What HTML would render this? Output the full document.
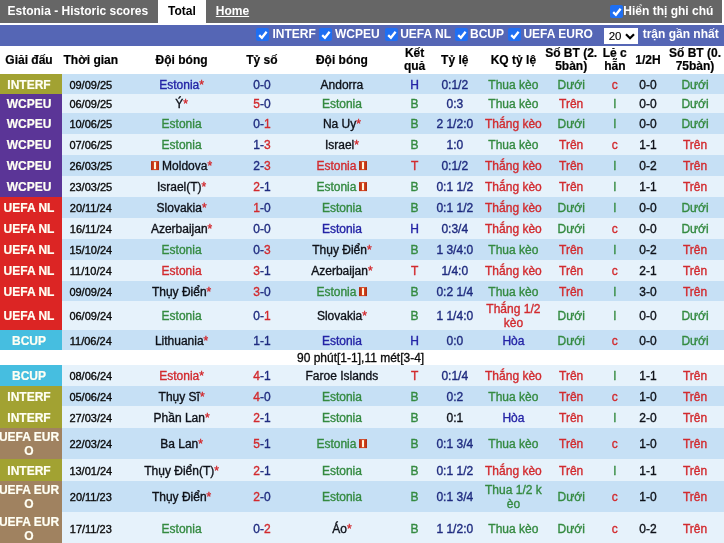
<!DOCTYPE html>
<html><head><meta charset="utf-8"><title>Estonia - Historic scores</title>
<style>
html,body{margin:0;padding:0;}
body{width:724px;height:543px;overflow:hidden;position:relative;background:#fff;font-family:"Liberation Sans",sans-serif;font-size:12px;color:#0a0a0a;}
#top{position:absolute;left:0;top:0;width:722px;height:23px;background:#666;}
#top .t{position:absolute;top:0;height:22.3px;line-height:22px;font-weight:bold;font-size:12px;color:#fff;white-space:nowrap;}
#tab{position:absolute;left:158px;top:0;width:48px;height:24.5px;background:#fff;}
#filter{position:absolute;left:0;top:24.5px;width:724px;height:21px;background:#5566b5;}
.lbl{position:absolute;top:-0.7px;line-height:21px;font-weight:bold;color:#fff;white-space:nowrap;}
.cb{position:absolute;width:13px;height:13px;border-radius:2px;background:#1f6ff2;}
.cb svg{position:absolute;left:0;top:0;}
#sel{position:absolute;left:604px;top:28.1px;width:34px;height:16px;background:#fff;}
#sel span{position:absolute;left:4.7px;top:0.2px;line-height:16px;font-size:11.5px;color:#000;-webkit-text-stroke:0.15px;}
#sel svg{position:absolute;left:21px;top:4.6px;}
.hd{position:absolute;top:45.5px;height:28.6px;}
.hc{position:absolute;width:120px;text-align:center;font-weight:bold;color:#000;-webkit-text-stroke:0.2px;line-height:13.8px;white-space:nowrap;}
.row{position:absolute;left:0;width:724px;}
.dk{background:#c6e0f5;}
.lt{background:#e6f2fb;}
.wr{background:#fff;}
.note{position:absolute;left:297px;top:1px;line-height:14px;white-space:nowrap;color:#0a0a0a;-webkit-text-stroke:0.3px;}
.lg{position:absolute;left:0;top:0;width:62px;height:100%;}
.lgt{position:absolute;left:-31px;width:120px;top:calc(50% + 1.5px);transform:translateY(-50%);text-align:center;color:#fffff4;-webkit-text-stroke:0.2px;font-weight:bold;line-height:13.8px;white-space:nowrap;}
.c{position:absolute;width:120px;top:calc(50% + 1.8px);transform:translateY(-50%);-webkit-text-stroke:0.35px;text-align:center;line-height:13.8px;white-space:nowrap;}
.dt{font-size:11px;}
.n{color:#1f2b7f;}
.b{color:#2424a6;}
.g{color:#348a40;}
.r{color:#d22a2e;}
.k{color:#0e1118;}
.rc{display:inline-block;width:8px;height:9px;background:linear-gradient(to right,#a82c12,#d8441c 35%,#d8441c 65%,#a82c12);vertical-align:0px;position:relative;margin-right:3px;}
.rc::after{content:"";position:absolute;left:3px;top:1px;width:2px;height:7px;background:#fff6dc;}
.rr{margin-right:0;margin-left:3px;}

body{will-change:transform;}

</style></head><body>
<div id="top">
  <div class="t" style="left:7.5px">Estonia - Historic scores</div>
</div>
<div id="tab"></div>
<div class="t" style="position:absolute;left:168px;top:0;height:22.3px;line-height:22px;font-weight:bold;color:#000;">Total</div>
<div class="t" style="position:absolute;left:215.8px;top:0;height:22.3px;line-height:22px;font-weight:bold;color:#fff;text-decoration:underline;">Home</div>
<div class="cb" style="left:609.5px;top:4.5px"><svg width="13" height="13" viewBox="0 0 13 13"><path d="M3.2 7.2 L5.9 9.8 L10.6 3.8" stroke="#fff" stroke-width="2.3" fill="none"/></svg></div>
<div class="t" style="position:absolute;left:623.3px;top:0;height:22.3px;line-height:22px;font-weight:bold;color:#fff;">Hiển thị ghi chú</div>
<div id="filter">
  <div class="cb" style="left:256px;top:3.6px"><svg width="13" height="13" viewBox="0 0 13 13"><path d="M3.2 7.2 L5.9 9.8 L10.6 3.8" stroke="#fff" stroke-width="2.3" fill="none"/></svg></div>
  <div class="lbl" style="left:272.4px">INTERF</div>
  <div class="cb" style="left:319px;top:3.6px"><svg width="13" height="13" viewBox="0 0 13 13"><path d="M3.2 7.2 L5.9 9.8 L10.6 3.8" stroke="#fff" stroke-width="2.3" fill="none"/></svg></div>
  <div class="lbl" style="left:335px">WCPEU</div>
  <div class="cb" style="left:384.5px;top:3.6px"><svg width="13" height="13" viewBox="0 0 13 13"><path d="M3.2 7.2 L5.9 9.8 L10.6 3.8" stroke="#fff" stroke-width="2.3" fill="none"/></svg></div>
  <div class="lbl" style="left:400.2px">UEFA NL</div>
  <div class="cb" style="left:455px;top:3.6px"><svg width="13" height="13" viewBox="0 0 13 13"><path d="M3.2 7.2 L5.9 9.8 L10.6 3.8" stroke="#fff" stroke-width="2.3" fill="none"/></svg></div>
  <div class="lbl" style="left:470px">BCUP</div>
  <div class="cb" style="left:507.5px;top:3.6px"><svg width="13" height="13" viewBox="0 0 13 13"><path d="M3.2 7.2 L5.9 9.8 L10.6 3.8" stroke="#fff" stroke-width="2.3" fill="none"/></svg></div>
  <div class="lbl" style="left:523.4px">UEFA EURO</div>
  <div class="lbl" style="left:642.7px">trận gần nhất</div>
</div>
<div id="sel"><span>20</span><svg width="10" height="7" viewBox="0 0 10 7"><path d="M1 1.2 L5 5.2 L9 1.2" stroke="#000" stroke-width="2.2" fill="none"/></svg></div>
<div class="hd" style="left:0;width:724px">
  <div class="hc" style="left:-31px;top:8.3px">Giải đấu</div>
  <div class="hc" style="left:30.8px;top:8.3px">Thời gian</div>
  <div class="hc" style="left:121.6px;top:8.3px">Đội bóng</div>
  <div class="hc" style="left:201.9px;top:8.3px">Tỷ số</div>
  <div class="hc" style="left:281.9px;top:8.3px">Đội bóng</div>
  <div class="hc" style="left:354.6px;top:1.2px">Kết<br>quả</div>
  <div class="hc" style="left:394.8px;top:8.3px">Tỷ lệ</div>
  <div class="hc" style="left:453.4px;top:8.3px">KQ tỷ lệ</div>
  <div class="hc" style="left:511.2px;top:1.2px">Số BT (2.<br>5bàn)</div>
  <div class="hc" style="left:554.8px;top:1.2px">Lẻ c<br>hẵn</div>
  <div class="hc" style="left:587.9px;top:8.3px">1/2H</div>
  <div class="hc" style="left:635px;top:1.2px">Số BT (0.<br>75bàn)</div>
</div>

<div class="row dk" style="top:74.0px;height:20.0px"><div class="lg" style="background:#a2a232"><div class="lgt">INTERF</div></div><div class="c dt" style="left:30.8px">09/09/25</div><div class="c " style="left:121.6px"><span class="b">Estonia</span><span class="r">*</span></div><div class="c " style="left:201.9px"><span class="n">0</span><span class="n">-</span><span class="n">0</span></div><div class="c " style="left:281.9px"><span class="k">Andorra</span></div><div class="c " style="left:354.6px"><span class="b">H</span></div><div class="c " style="left:394.8px"><span class="n">0:1/2</span></div><div class="c " style="left:453.4px"><span class="g">Thua kèo</span></div><div class="c " style="left:511.2px"><span class="g">Dưới</span></div><div class="c " style="left:554.8px"><span class="r">c</span></div><div class="c k" style="left:587.9px">0-0</div><div class="c " style="left:635.0px"><span class="g">Dưới</span></div></div>
<div class="row lt" style="top:94.0px;height:19.0px"><div class="lg" style="background:#5b3597"><div class="lgt">WCPEU</div></div><div class="c dt" style="left:30.8px">06/09/25</div><div class="c " style="left:121.6px"><span class="k">Ý</span><span class="r">*</span></div><div class="c " style="left:201.9px"><span class="r">5</span><span class="n">-</span><span class="n">0</span></div><div class="c " style="left:281.9px"><span class="g">Estonia</span></div><div class="c " style="left:354.6px"><span class="g">B</span></div><div class="c " style="left:394.8px"><span class="n">0:3</span></div><div class="c " style="left:453.4px"><span class="g">Thua kèo</span></div><div class="c " style="left:511.2px"><span class="r">Trên</span></div><div class="c " style="left:554.8px"><span class="g">l</span></div><div class="c k" style="left:587.9px">0-0</div><div class="c " style="left:635.0px"><span class="g">Dưới</span></div></div>
<div class="row dk" style="top:113.0px;height:21.0px"><div class="lg" style="background:#5b3597"><div class="lgt">WCPEU</div></div><div class="c dt" style="left:30.8px">10/06/25</div><div class="c " style="left:121.6px"><span class="g">Estonia</span></div><div class="c " style="left:201.9px"><span class="n">0</span><span class="n">-</span><span class="r">1</span></div><div class="c " style="left:281.9px"><span class="k">Na Uy</span><span class="r">*</span></div><div class="c " style="left:354.6px"><span class="g">B</span></div><div class="c " style="left:394.8px"><span class="n">2 1/2:0</span></div><div class="c " style="left:453.4px"><span class="r">Thắng kèo</span></div><div class="c " style="left:511.2px"><span class="g">Dưới</span></div><div class="c " style="left:554.8px"><span class="g">l</span></div><div class="c k" style="left:587.9px">0-0</div><div class="c " style="left:635.0px"><span class="g">Dưới</span></div></div>
<div class="row lt" style="top:134.0px;height:21.0px"><div class="lg" style="background:#5b3597"><div class="lgt">WCPEU</div></div><div class="c dt" style="left:30.8px">07/06/25</div><div class="c " style="left:121.6px"><span class="g">Estonia</span></div><div class="c " style="left:201.9px"><span class="n">1</span><span class="n">-</span><span class="r">3</span></div><div class="c " style="left:281.9px"><span class="k">Israel</span><span class="r">*</span></div><div class="c " style="left:354.6px"><span class="g">B</span></div><div class="c " style="left:394.8px"><span class="n">1:0</span></div><div class="c " style="left:453.4px"><span class="g">Thua kèo</span></div><div class="c " style="left:511.2px"><span class="r">Trên</span></div><div class="c " style="left:554.8px"><span class="r">c</span></div><div class="c k" style="left:587.9px">1-1</div><div class="c " style="left:635.0px"><span class="r">Trên</span></div></div>
<div class="row dk" style="top:155.0px;height:21.0px"><div class="lg" style="background:#5b3597"><div class="lgt">WCPEU</div></div><div class="c dt" style="left:30.8px">26/03/25</div><div class="c " style="left:121.6px"><i class="rc"></i><span class="k">Moldova</span><span class="r">*</span></div><div class="c " style="left:201.9px"><span class="n">2</span><span class="n">-</span><span class="r">3</span></div><div class="c " style="left:281.9px"><span class="r">Estonia</span><i class="rc rr"></i></div><div class="c " style="left:354.6px"><span class="r">T</span></div><div class="c " style="left:394.8px"><span class="n">0:1/2</span></div><div class="c " style="left:453.4px"><span class="r">Thắng kèo</span></div><div class="c " style="left:511.2px"><span class="r">Trên</span></div><div class="c " style="left:554.8px"><span class="g">l</span></div><div class="c k" style="left:587.9px">0-2</div><div class="c " style="left:635.0px"><span class="r">Trên</span></div></div>
<div class="row lt" style="top:176.0px;height:21.0px"><div class="lg" style="background:#5b3597"><div class="lgt">WCPEU</div></div><div class="c dt" style="left:30.8px">23/03/25</div><div class="c " style="left:121.6px"><span class="k">Israel(T)</span><span class="r">*</span></div><div class="c " style="left:201.9px"><span class="r">2</span><span class="n">-</span><span class="n">1</span></div><div class="c " style="left:281.9px"><span class="g">Estonia</span><i class="rc rr"></i></div><div class="c " style="left:354.6px"><span class="g">B</span></div><div class="c " style="left:394.8px"><span class="n">0:1 1/2</span></div><div class="c " style="left:453.4px"><span class="r">Thắng kèo</span></div><div class="c " style="left:511.2px"><span class="r">Trên</span></div><div class="c " style="left:554.8px"><span class="g">l</span></div><div class="c k" style="left:587.9px">1-1</div><div class="c " style="left:635.0px"><span class="r">Trên</span></div></div>
<div class="row dk" style="top:197.0px;height:21.0px"><div class="lg" style="background:#dc2524"><div class="lgt">UEFA NL</div></div><div class="c dt" style="left:30.8px">20/11/24</div><div class="c " style="left:121.6px"><span class="k">Slovakia</span><span class="r">*</span></div><div class="c " style="left:201.9px"><span class="r">1</span><span class="n">-</span><span class="n">0</span></div><div class="c " style="left:281.9px"><span class="g">Estonia</span></div><div class="c " style="left:354.6px"><span class="g">B</span></div><div class="c " style="left:394.8px"><span class="n">0:1 1/2</span></div><div class="c " style="left:453.4px"><span class="r">Thắng kèo</span></div><div class="c " style="left:511.2px"><span class="g">Dưới</span></div><div class="c " style="left:554.8px"><span class="g">l</span></div><div class="c k" style="left:587.9px">0-0</div><div class="c " style="left:635.0px"><span class="g">Dưới</span></div></div>
<div class="row lt" style="top:218.0px;height:21.0px"><div class="lg" style="background:#dc2524"><div class="lgt">UEFA NL</div></div><div class="c dt" style="left:30.8px">16/11/24</div><div class="c " style="left:121.6px"><span class="k">Azerbaijan</span><span class="r">*</span></div><div class="c " style="left:201.9px"><span class="n">0</span><span class="n">-</span><span class="n">0</span></div><div class="c " style="left:281.9px"><span class="b">Estonia</span></div><div class="c " style="left:354.6px"><span class="b">H</span></div><div class="c " style="left:394.8px"><span class="n">0:3/4</span></div><div class="c " style="left:453.4px"><span class="r">Thắng kèo</span></div><div class="c " style="left:511.2px"><span class="g">Dưới</span></div><div class="c " style="left:554.8px"><span class="r">c</span></div><div class="c k" style="left:587.9px">0-0</div><div class="c " style="left:635.0px"><span class="g">Dưới</span></div></div>
<div class="row dk" style="top:239.0px;height:21.0px"><div class="lg" style="background:#dc2524"><div class="lgt">UEFA NL</div></div><div class="c dt" style="left:30.8px">15/10/24</div><div class="c " style="left:121.6px"><span class="g">Estonia</span></div><div class="c " style="left:201.9px"><span class="n">0</span><span class="n">-</span><span class="r">3</span></div><div class="c " style="left:281.9px"><span class="k">Thụy Điển</span><span class="r">*</span></div><div class="c " style="left:354.6px"><span class="g">B</span></div><div class="c " style="left:394.8px"><span class="n">1 3/4:0</span></div><div class="c " style="left:453.4px"><span class="g">Thua kèo</span></div><div class="c " style="left:511.2px"><span class="r">Trên</span></div><div class="c " style="left:554.8px"><span class="g">l</span></div><div class="c k" style="left:587.9px">0-2</div><div class="c " style="left:635.0px"><span class="r">Trên</span></div></div>
<div class="row lt" style="top:260.0px;height:21.0px"><div class="lg" style="background:#dc2524"><div class="lgt">UEFA NL</div></div><div class="c dt" style="left:30.8px">11/10/24</div><div class="c " style="left:121.6px"><span class="r">Estonia</span></div><div class="c " style="left:201.9px"><span class="r">3</span><span class="n">-</span><span class="n">1</span></div><div class="c " style="left:281.9px"><span class="k">Azerbaijan</span><span class="r">*</span></div><div class="c " style="left:354.6px"><span class="r">T</span></div><div class="c " style="left:394.8px"><span class="n">1/4:0</span></div><div class="c " style="left:453.4px"><span class="r">Thắng kèo</span></div><div class="c " style="left:511.2px"><span class="r">Trên</span></div><div class="c " style="left:554.8px"><span class="r">c</span></div><div class="c k" style="left:587.9px">2-1</div><div class="c " style="left:635.0px"><span class="r">Trên</span></div></div>
<div class="row dk" style="top:281.0px;height:20.0px"><div class="lg" style="background:#dc2524"><div class="lgt">UEFA NL</div></div><div class="c dt" style="left:30.8px">09/09/24</div><div class="c " style="left:121.6px"><span class="k">Thụy Điển</span><span class="r">*</span></div><div class="c " style="left:201.9px"><span class="r">3</span><span class="n">-</span><span class="n">0</span></div><div class="c " style="left:281.9px"><span class="g">Estonia</span><i class="rc rr"></i></div><div class="c " style="left:354.6px"><span class="g">B</span></div><div class="c " style="left:394.8px"><span class="n">0:2 1/4</span></div><div class="c " style="left:453.4px"><span class="g">Thua kèo</span></div><div class="c " style="left:511.2px"><span class="r">Trên</span></div><div class="c " style="left:554.8px"><span class="g">l</span></div><div class="c k" style="left:587.9px">3-0</div><div class="c " style="left:635.0px"><span class="r">Trên</span></div></div>
<div class="row lt" style="top:301.0px;height:29.0px"><div class="lg" style="background:#dc2524"><div class="lgt">UEFA NL</div></div><div class="c dt" style="left:30.8px">06/09/24</div><div class="c " style="left:121.6px"><span class="g">Estonia</span></div><div class="c " style="left:201.9px"><span class="n">0</span><span class="n">-</span><span class="r">1</span></div><div class="c " style="left:281.9px"><span class="k">Slovakia</span><span class="r">*</span></div><div class="c " style="left:354.6px"><span class="g">B</span></div><div class="c " style="left:394.8px"><span class="n">1 1/4:0</span></div><div class="c " style="left:453.4px"><span class="r">Thắng 1/2<br>kèo</span></div><div class="c " style="left:511.2px"><span class="g">Dưới</span></div><div class="c " style="left:554.8px"><span class="g">l</span></div><div class="c k" style="left:587.9px">0-0</div><div class="c " style="left:635.0px"><span class="g">Dưới</span></div></div>
<div class="row dk" style="top:330.0px;height:20.0px"><div class="lg" style="background:#46bee0"><div class="lgt">BCUP</div></div><div class="c dt" style="left:30.8px">11/06/24</div><div class="c " style="left:121.6px"><span class="k">Lithuania</span><span class="r">*</span></div><div class="c " style="left:201.9px"><span class="n">1</span><span class="n">-</span><span class="n">1</span></div><div class="c " style="left:281.9px"><span class="b">Estonia</span></div><div class="c " style="left:354.6px"><span class="b">H</span></div><div class="c " style="left:394.8px"><span class="n">0:0</span></div><div class="c " style="left:453.4px"><span class="b">Hòa</span></div><div class="c " style="left:511.2px"><span class="g">Dưới</span></div><div class="c " style="left:554.8px"><span class="r">c</span></div><div class="c k" style="left:587.9px">0-0</div><div class="c " style="left:635.0px"><span class="g">Dưới</span></div></div>
<div class="row wr" style="top:350px;height:15px"><div class="note">90 phút[1-1],11 mét[3-4]</div></div>
<div class="row lt" style="top:365.0px;height:21.0px"><div class="lg" style="background:#46bee0"><div class="lgt">BCUP</div></div><div class="c dt" style="left:30.8px">08/06/24</div><div class="c " style="left:121.6px"><span class="r">Estonia</span><span class="r">*</span></div><div class="c " style="left:201.9px"><span class="r">4</span><span class="n">-</span><span class="n">1</span></div><div class="c " style="left:281.9px"><span class="k">Faroe Islands</span></div><div class="c " style="left:354.6px"><span class="r">T</span></div><div class="c " style="left:394.8px"><span class="n">0:1/4</span></div><div class="c " style="left:453.4px"><span class="r">Thắng kèo</span></div><div class="c " style="left:511.2px"><span class="r">Trên</span></div><div class="c " style="left:554.8px"><span class="g">l</span></div><div class="c k" style="left:587.9px">1-1</div><div class="c " style="left:635.0px"><span class="r">Trên</span></div></div>
<div class="row dk" style="top:386.0px;height:20.0px"><div class="lg" style="background:#a2a232"><div class="lgt">INTERF</div></div><div class="c dt" style="left:30.8px">05/06/24</div><div class="c " style="left:121.6px"><span class="k">Thụy Sĩ</span><span class="r">*</span></div><div class="c " style="left:201.9px"><span class="r">4</span><span class="n">-</span><span class="n">0</span></div><div class="c " style="left:281.9px"><span class="g">Estonia</span></div><div class="c " style="left:354.6px"><span class="g">B</span></div><div class="c " style="left:394.8px"><span class="n">0:2</span></div><div class="c " style="left:453.4px"><span class="g">Thua kèo</span></div><div class="c " style="left:511.2px"><span class="r">Trên</span></div><div class="c " style="left:554.8px"><span class="r">c</span></div><div class="c k" style="left:587.9px">1-0</div><div class="c " style="left:635.0px"><span class="r">Trên</span></div></div>
<div class="row lt" style="top:406.0px;height:22.0px"><div class="lg" style="background:#a2a232"><div class="lgt">INTERF</div></div><div class="c dt" style="left:30.8px">27/03/24</div><div class="c " style="left:121.6px"><span class="k">Phần Lan</span><span class="r">*</span></div><div class="c " style="left:201.9px"><span class="r">2</span><span class="n">-</span><span class="n">1</span></div><div class="c " style="left:281.9px"><span class="g">Estonia</span></div><div class="c " style="left:354.6px"><span class="g">B</span></div><div class="c " style="left:394.8px"><span class="k">0:1</span></div><div class="c " style="left:453.4px"><span class="b">Hòa</span></div><div class="c " style="left:511.2px"><span class="r">Trên</span></div><div class="c " style="left:554.8px"><span class="g">l</span></div><div class="c k" style="left:587.9px">2-0</div><div class="c " style="left:635.0px"><span class="r">Trên</span></div></div>
<div class="row dk" style="top:428.0px;height:31.0px"><div class="lg" style="background:#a08260"><div class="lgt">UEFA EUR<br>O</div></div><div class="c dt" style="left:30.8px">22/03/24</div><div class="c " style="left:121.6px"><span class="k">Ba Lan</span><span class="r">*</span></div><div class="c " style="left:201.9px"><span class="r">5</span><span class="n">-</span><span class="n">1</span></div><div class="c " style="left:281.9px"><span class="g">Estonia</span><i class="rc rr"></i></div><div class="c " style="left:354.6px"><span class="g">B</span></div><div class="c " style="left:394.8px"><span class="n">0:1 3/4</span></div><div class="c " style="left:453.4px"><span class="g">Thua kèo</span></div><div class="c " style="left:511.2px"><span class="r">Trên</span></div><div class="c " style="left:554.8px"><span class="r">c</span></div><div class="c k" style="left:587.9px">1-0</div><div class="c " style="left:635.0px"><span class="r">Trên</span></div></div>
<div class="row lt" style="top:459.0px;height:22.0px"><div class="lg" style="background:#a2a232"><div class="lgt">INTERF</div></div><div class="c dt" style="left:30.8px">13/01/24</div><div class="c " style="left:121.6px"><span class="k">Thụy Điển(T)</span><span class="r">*</span></div><div class="c " style="left:201.9px"><span class="r">2</span><span class="n">-</span><span class="n">1</span></div><div class="c " style="left:281.9px"><span class="g">Estonia</span></div><div class="c " style="left:354.6px"><span class="g">B</span></div><div class="c " style="left:394.8px"><span class="n">0:1 1/2</span></div><div class="c " style="left:453.4px"><span class="r">Thắng kèo</span></div><div class="c " style="left:511.2px"><span class="r">Trên</span></div><div class="c " style="left:554.8px"><span class="g">l</span></div><div class="c k" style="left:587.9px">1-1</div><div class="c " style="left:635.0px"><span class="r">Trên</span></div></div>
<div class="row dk" style="top:481.0px;height:31.0px"><div class="lg" style="background:#a08260"><div class="lgt">UEFA EUR<br>O</div></div><div class="c dt" style="left:30.8px">20/11/23</div><div class="c " style="left:121.6px"><span class="k">Thụy Điển</span><span class="r">*</span></div><div class="c " style="left:201.9px"><span class="r">2</span><span class="n">-</span><span class="n">0</span></div><div class="c " style="left:281.9px"><span class="g">Estonia</span></div><div class="c " style="left:354.6px"><span class="g">B</span></div><div class="c " style="left:394.8px"><span class="n">0:1 3/4</span></div><div class="c " style="left:453.4px"><span class="g">Thua 1/2 k<br>èo</span></div><div class="c " style="left:511.2px"><span class="g">Dưới</span></div><div class="c " style="left:554.8px"><span class="r">c</span></div><div class="c k" style="left:587.9px">1-0</div><div class="c " style="left:635.0px"><span class="r">Trên</span></div></div>
<div class="row lt" style="top:512.0px;height:33.0px"><div class="lg" style="background:#a08260"><div class="lgt">UEFA EUR<br>O</div></div><div class="c dt" style="left:30.8px">17/11/23</div><div class="c " style="left:121.6px"><span class="g">Estonia</span></div><div class="c " style="left:201.9px"><span class="n">0</span><span class="n">-</span><span class="r">2</span></div><div class="c " style="left:281.9px"><span class="k">Áo</span><span class="r">*</span></div><div class="c " style="left:354.6px"><span class="g">B</span></div><div class="c " style="left:394.8px"><span class="n">1 1/2:0</span></div><div class="c " style="left:453.4px"><span class="g">Thua kèo</span></div><div class="c " style="left:511.2px"><span class="g">Dưới</span></div><div class="c " style="left:554.8px"><span class="r">c</span></div><div class="c k" style="left:587.9px">0-2</div><div class="c " style="left:635.0px"><span class="r">Trên</span></div></div>
</body></html>
